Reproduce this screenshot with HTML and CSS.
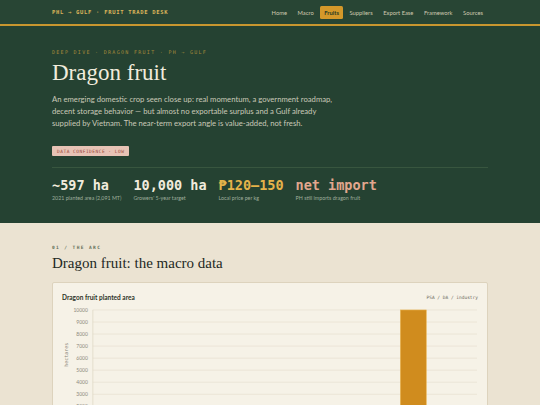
FILE: index.html
```html
<!DOCTYPE html>
<html lang="en">
<head>
    <meta charset="UTF-8">
    <meta name="viewport" content="width=device-width, initial-scale=1.0">
    <title>Dragon fruit · PHL → Gulf</title>
    <link rel="stylesheet" href="styles.css">
</head>
<body>
    <header class="topbar">
        <div class="wrap topbar-inner">
            <div class="brand">PHL → GULF · FRUIT TRADE DESK</div>
            <nav class="nav">
                <a href="#">Home</a>
                <a href="#">Macro</a>
                <a href="#" class="active">Fruits</a>
                <a href="#">Suppliers</a>
                <a href="#">Export Ease</a>
                <a href="#">Framework</a>
                <a href="#">Sources</a>
            </nav>
        </div>
    </header>

    <section class="hero">
        <div class="wrap">
            <div class="eyebrow">DEEP DIVE · DRAGON FRUIT · PH → GULF</div>
            <h1>Dragon fruit</h1>
            <p class="lede">An emerging domestic crop seen close up: real momentum, a government roadmap, decent storage behavior — but almost no exportable surplus and a Gulf already supplied by Vietnam. The near-term export angle is value-added, not fresh.</p>
            <div class="badge">DATA CONFIDENCE · LOW</div>

            <div class="stats">
                <div class="stat">
                    <div class="stat-num">~597 ha</div>
                    <div class="stat-label">2021 planted area (2,091 MT)</div>
                </div>
                <div class="stat">
                    <div class="stat-num">10,000 ha</div>
                    <div class="stat-label">Growers' 5-year target</div>
                </div>
                <div class="stat">
                    <div class="stat-num gold">₱120–150</div>
                    <div class="stat-label">Local price per kg</div>
                </div>
                <div class="stat">
                    <div class="stat-num salmon">net import</div>
                    <div class="stat-label">PH still imports dragon fruit</div>
                </div>
            </div>
        </div>
    </section>

    <section class="section">
        <div class="wrap">
            <div class="section-tag">01 / THE ARC</div>
            <h2>Dragon fruit: the macro data</h2>

            <div class="card">
                <div class="card-head">
                    <span class="card-title">Dragon fruit planted area</span>
                    <span class="card-src">PSA / DA / industry</span>
                </div>
                <svg class="chart" viewBox="0 0 418 150">
                    <text class="axis-title" transform="translate(6 50) rotate(-90)" text-anchor="middle">hectares</text>
                    <g class="grid">
                        <line x1="31" x2="417" y1="5" y2="5"/>
                        <line x1="31" x2="417" y1="17.1" y2="17.1"/>
                        <line x1="31" x2="417" y1="29.2" y2="29.2"/>
                        <line x1="31" x2="417" y1="41.3" y2="41.3"/>
                        <line x1="31" x2="417" y1="53.4" y2="53.4"/>
                        <line x1="31" x2="417" y1="65.5" y2="65.5"/>
                        <line x1="31" x2="417" y1="77.6" y2="77.6"/>
                        <line x1="31" x2="417" y1="89.7" y2="89.7"/>
                        <line x1="31" x2="417" y1="101.8" y2="101.8"/>
                        <line x1="31" x2="417" y1="113.9" y2="113.9"/>
                        <line x1="31" x2="417" y1="126" y2="126"/>
                    </g>
                    <line class="yaxis" x1="31" x2="31" y1="5" y2="126"/>
                    <g class="ticks" text-anchor="end">
                        <text x="26" y="7">10000</text>
                        <text x="26" y="19.1">9000</text>
                        <text x="26" y="31.2">8000</text>
                        <text x="26" y="43.3">7000</text>
                        <text x="26" y="55.4">6000</text>
                        <text x="26" y="67.5">5000</text>
                        <text x="26" y="79.6">4000</text>
                        <text x="26" y="91.7">3000</text>
                        <text x="26" y="103.8">2000</text>
                        <text x="26" y="115.9">1000</text>
                        <text x="26" y="128">0</text>
                    </g>
                    <!-- bar heights: 12.1px per 1000 ha -->
                    <g class="bars">
                        <rect x="83" y="122.4" width="26" height="3.6"/>
                        <rect x="212" y="118.8" width="26" height="7.2"/>
                        <rect x="340" y="5" width="26" height="121"/>
                    </g>
                    <g class="ticks" text-anchor="middle">
                        <text x="96" y="136">2019</text>
                        <text x="225" y="136">2021</text>
                        <text x="353" y="136">5-yr target</text>
                    </g>
                </svg>
            </div>
        </div>
    </section>
</body>
</html>
```

FILE: styles.css
```css
* {
    box-sizing: border-box;
}
body {
    margin: 0;
    font-family: Lato, "Liberation Sans", sans-serif;
    background: #ebe3d2;
}
.wrap {
    width: 436px;
    margin: 0 auto;
}

/* top bar */
.topbar {
    background: #284534;
    border-bottom: 2px solid #c8962f;
}
.topbar-inner {
    height: 24px;
    display: flex;
    align-items: center;
    justify-content: space-between;
}
.brand {
    font-family: "DejaVu Sans Mono", monospace;
    font-size: 5.5px;
    font-weight: bold;
    letter-spacing: 0.7px;
    color: #d9b45a;
}
.nav {
    display: flex;
    gap: 2.5px;
    margin-right: 1px;
}
.nav a {
    font-size: 5.8px;
    color: #cfc9b0;
    text-decoration: none;
    padding: 3px 4px;
    border-radius: 1.5px;
}
.nav a.active {
    background: #d4982a;
    color: #2a3a22;
    font-weight: bold;
}

/* hero */
.hero {
    background: #254232;
    padding: 23px 0 22px;
    color: #ece6d6;
}
.eyebrow {
    font-family: "DejaVu Sans Mono", monospace;
    font-size: 5px;
    letter-spacing: 1.3px;
    color: #a3893a;
}
.hero h1 {
    font-family: "Liberation Serif", serif;
    font-weight: normal;
    font-size: 23px;
    margin: 5px 0 0;
    line-height: 1.1;
    color: #f1ecdd;
}
.lede {
    font-size: 7.7px;
    line-height: 12px;
    max-width: 285px;
    color: #c9c9b8;
    margin: 8px 0 17px;
}
.badge {
    width: fit-content;
    background: #e7c3b5;
    color: #9a4a3c;
    font-family: "DejaVu Sans Mono", monospace;
    font-size: 4.5px;
    line-height: 5px;
    letter-spacing: 0.5px;
    padding: 2.5px 5px;
    border-radius: 1px;
}
.stats {
    display: flex;
    gap: 12px;
    margin-top: 11px;
    padding-top: 9px;
    border-top: 1px solid #38563f;
}
.stat-num {
    font-family: "DejaVu Sans Mono", monospace;
    font-weight: bold;
    font-size: 13.5px;
    color: #f1ecdd;
    line-height: 1.2;
}
.stat-num.gold {
    color: #e4b34a;
}
.stat-num.salmon {
    color: #e2a78e;
}
.stat-label {
    font-size: 5.3px;
    color: #9fae9c;
    margin-top: 2px;
}

/* section */
.section {
    padding: 22px 0 30px;
}
.section-tag {
    font-family: "DejaVu Sans Mono", monospace;
    font-size: 4.5px;
    font-weight: bold;
    letter-spacing: 1.4px;
    color: #5f6e58;
}
.section h2 {
    font-family: "Liberation Serif", serif;
    font-weight: normal;
    font-size: 15px;
    color: #23291f;
    margin: 5px 0 10px;
}
.card {
    background: #f6f2e7;
    border: 1px solid #ddd3bd;
    border-radius: 2px;
    padding: 11px 9px 10px;
}
.card-head {
    display: flex;
    justify-content: space-between;
    align-items: center;
    margin-bottom: 4px;
}
.card-title {
    font-size: 6.5px;
    font-weight: bold;
    color: #2e3328;
}
.card-src {
    font-family: "DejaVu Sans Mono", monospace;
    font-size: 4.5px;
    color: #6c6a5e;
}
.chart {
    display: block;
    width: 100%;
}
.chart .grid line {
    stroke: #e7e0cf;
    stroke-width: 0.7;
}
.chart .yaxis {
    stroke: #ddd5c2;
    stroke-width: 0.7;
}
.chart .ticks text {
    font-family: Lato, "Liberation Sans", sans-serif;
    font-size: 5px;
    fill: #8d8a7c;
}
.chart .axis-title {
    font-family: "DejaVu Sans Mono", monospace;
    font-size: 5px;
    fill: #8d8a7c;
}
.chart .bars rect {
    fill: #d08c1e;
    stroke: #e9b34e;
    stroke-width: 0.6;
}
```
